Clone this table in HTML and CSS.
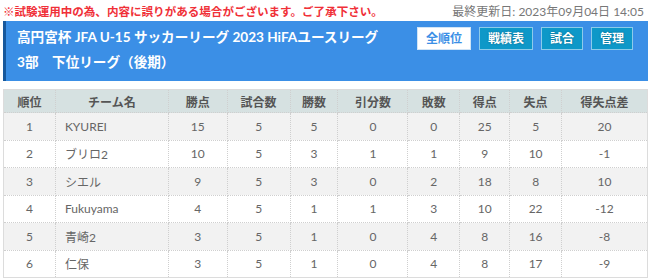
FILE: index.html
```html
<!DOCTYPE html>
<html lang="ja">
<head>
<meta charset="utf-8">
<link rel="stylesheet" href="styles.css">
</head>
<body>
<div class="page">
  <div class="topbar">
    <span class="notice">※試験運用中の為、内容に誤りがある場合がございます。ご了承下さい。</span>
    <span class="updated">最終更新日: 2023年09月04日 14:05</span>
  </div>
  <div class="header">
    <div class="title">
      <div>高円宮杯 JFA U-15 サッカーリーグ 2023 HiFAユースリーグ</div>
      <div>3部　下位リーグ（後期）</div>
    </div>
    <div class="btns">
      <span class="btn active">全順位</span>
      <span class="btn">戦績表</span>
      <span class="btn">試合</span>
      <span class="btn">管理</span>
    </div>
  </div>
  <table class="standings">
    <thead>
      <tr>
        <th class="c-rank">順位</th>
        <th class="c-team">チーム名</th>
        <th class="c-pts">勝点</th>
        <th class="c-gp">試合数</th>
        <th class="c-w">勝数</th>
        <th class="c-d">引分数</th>
        <th class="c-l">敗数</th>
        <th class="c-gf">得点</th>
        <th class="c-ga">失点</th>
        <th class="c-gd">得失点差</th>
      </tr>
    </thead>
    <tbody>
      <tr><td>1</td><td class="team">KYUREI</td><td>15</td><td>5</td><td>5</td><td>0</td><td>0</td><td>25</td><td>5</td><td>20</td></tr>
      <tr><td>2</td><td class="team">ブリロ2</td><td>10</td><td>5</td><td>3</td><td>1</td><td>1</td><td>9</td><td>10</td><td>-1</td></tr>
      <tr><td>3</td><td class="team">シエル</td><td>9</td><td>5</td><td>3</td><td>0</td><td>2</td><td>18</td><td>8</td><td>10</td></tr>
      <tr><td>4</td><td class="team">Fukuyama</td><td>4</td><td>5</td><td>1</td><td>1</td><td>3</td><td>10</td><td>22</td><td>-12</td></tr>
      <tr><td>5</td><td class="team">青崎2</td><td>3</td><td>5</td><td>1</td><td>0</td><td>4</td><td>8</td><td>16</td><td>-8</td></tr>
      <tr><td>6</td><td class="team">仁保</td><td>3</td><td>5</td><td>1</td><td>0</td><td>4</td><td>8</td><td>17</td><td>-9</td></tr>
    </tbody>
  </table>
</div>
</body>
</html>
```

FILE: styles.css
```css
* { box-sizing: border-box; }
html, body { margin: 0; padding: 0; background: #fff; }
body {
  font-family: "Lato", "Noto Sans CJK JP", sans-serif;
  color: #666;
  font-size: 12px;
}
.page { padding: 0 2px 0 3px; }
.topbar {
  height: 21px;
  display: flex;
  justify-content: space-between;
  align-items: center;
  padding-right: 4px;
}
.notice {
  color: #f03038;
  font-weight: bold;
  font-size: 11.55px;
}
.updated {
  color: #777;
  font-size: 12px;
}
.header {
  height: 60px;
  background: #3b8fe6;
  border-left: 3px solid #17589c;
  display: flex;
  justify-content: space-between;
  align-items: flex-start;
  padding: 4px 15px 0 11px;
}
.title {
  color: #fff;
  font-weight: bold;
  font-size: 13.6px;
  line-height: 25px;
}
.btns {
  display: flex;
  gap: 8px;
  padding-top: 2px;
}
.btn {
  height: 23px;
  line-height: 21px;
  padding: 0 8px;
  border: 1px solid #8ccbea;
  background: #0e98c8;
  color: #fff;
  font-weight: bold;
  font-size: 12px;
  text-shadow: 0 0 2px rgba(0,0,0,0.35);
}
.btn.active {
  background: #fff;
  color: #3b8fe6;
  border-color: #d0e4f6;
  text-shadow: none;
}
.standings {
  margin-top: 8px;
  width: 100%;
  border-collapse: collapse;
  border: 1px solid #dcdcdc;
}
.standings th, .standings td {
  border: 1px dotted #cfcfcf;
  text-align: center;
  padding: 0;
}
.standings th {
  background: #d6e1e1;
  color: #555;
  font-weight: bold;
  height: 23px;
  font-size: 12px;
}
.standings td {
  height: 27.5px;
  font-size: 12px;
}
.standings td.team { text-align: left; padding-left: 9px; }
.standings tbody tr:nth-child(odd) td { background: #f2f2f2; }
.standings tbody tr:nth-child(even) td { background: #fff; }
.c-rank { width: 52px; }
.c-team { width: 113px; }
.c-pts { width: 59px; }
.c-gp { width: 63px; }
.c-w { width: 48px; }
.c-d { width: 70px; }
.c-l { width: 52px; }
.c-gf { width: 50px; }
.c-ga { width: 52px; }
.c-gd { width: 86px; }
```
